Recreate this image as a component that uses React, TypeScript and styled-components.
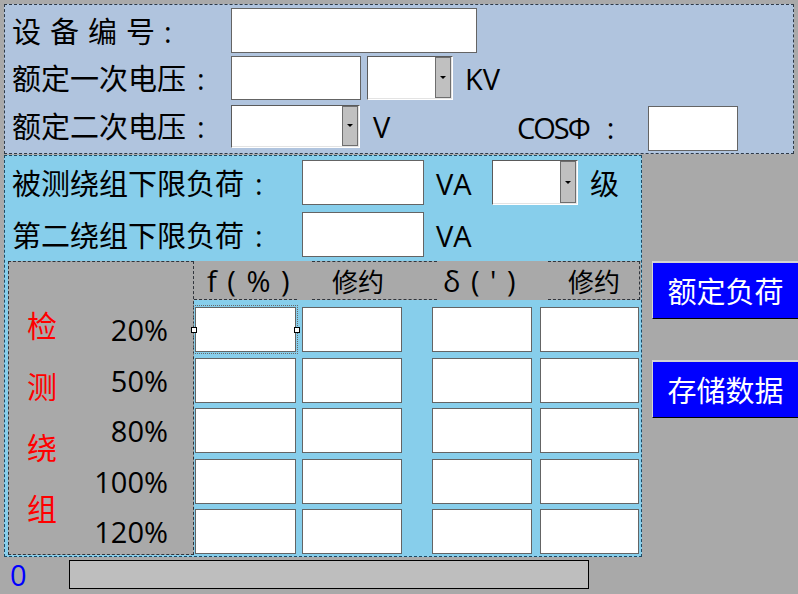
import React from "react";
import styled, { createGlobalStyle } from "styled-components";

const FONT = `"Open Sans", "Noto Sans CJK SC", sans-serif`;

const GlobalStyle = createGlobalStyle`
  html, body { margin: 0; padding: 0; background: #a9a9a9; }
  body { font-family: ${FONT}; }
  *, *::before, *::after { box-sizing: border-box; }
`;

const Page = styled.div`
  width: 798px;
  height: 594px;
  overflow: hidden;
  padding: 4px 0 0 4px;
  background: #a9a9a9;
  font-family: ${FONT};
  color: #000;
`;

const TopPanel = styled.div`
  width: 790px;
  height: 150px;
  border: 1px dashed #2e3a48;
  background: #b0c4de;
  padding: 3px 0 0 7px;
  display: flex;
  flex-direction: column;
`;

const FormRow = styled.div<{ $h: number; $mt?: number; $ml?: number }>`
  display: flex;
  align-items: center;
  height: ${(p) => p.$h}px;
  margin-top: ${(p) => p.$mt ?? 0}px;
  margin-left: ${(p) => p.$ml ?? 0}px;
`;

const Label = styled.div<{ $w: number; $ls?: number }>`
  width: ${(p) => p.$w}px;
  flex: none;
  font-size: 29px;
  line-height: 34px;
  letter-spacing: ${(p) => p.$ls ?? 0}px;
  white-space: nowrap;
  padding-top: 2px;
`;

const Colon = styled.span<{ $ml: number }>`
  margin-left: ${(p) => p.$ml}px;
  letter-spacing: 0;
`;

const TextBox = styled.div<{ $w: number; $h: number; $mt?: number }>`
  flex: none;
  width: ${(p) => p.$w}px;
  height: ${(p) => p.$h}px;
  margin-top: ${(p) => p.$mt ?? 0}px;
  background: #fff;
  border: 1px solid #646464;
`;

const Combo = styled.div<{ $w: number; $h: number; $ml?: number }>`
  flex: none;
  width: ${(p) => p.$w}px;
  height: ${(p) => p.$h}px;
  margin-left: ${(p) => p.$ml ?? 0}px;
  display: flex;
  justify-content: flex-end;
  align-items: stretch;
  background: #fff;
  border-style: solid;
  border-width: 1px;
  border-color: #5a5a5a #ffffff #ffffff #5a5a5a;
  box-shadow: inset -1px -1px 0 #e3e3e3;
  padding: 0 1px 1px 0;
`;

const DropButton = styled.div`
  width: 16px;
  background: #c0c0c0;
  border: 1px solid #6e6e6e;
  display: flex;
  align-items: center;
  justify-content: center;
  &::after {
    content: "";
    border-left: 3px solid transparent;
    border-right: 3px solid transparent;
    border-top: 3px solid #000;
  }
`;

const Unit = styled.div<{ $ml: number; $w?: number }>`
  flex: none;
  margin-left: ${(p) => p.$ml}px;
  width: ${(p) => (p.$w ? `${p.$w}px` : "auto")};
  font-size: 29px;
  line-height: 34px;
  padding-top: 2px;
  white-space: nowrap;
`;

const CosLabel = styled.div`
  flex: none;
  width: 131px;
  font-size: 29px;
  line-height: 34px;
  padding-top: 4px;
  white-space: nowrap;
  letter-spacing: -2px;
`;

const Middle = styled.div`
  display: flex;
  margin-top: 1px;
`;

const SkyPanel = styled.div`
  width: 638px;
  height: 402px;
  border: 1px dashed #1e4a64;
  background: #87ceeb;
  padding: 4px 0 0 3px;
  display: flex;
  flex-direction: column;
`;

const Section = styled.div`
  display: flex;
  margin-top: 4px;
`;

const GroupBox = styled.div`
  width: 186px;
  height: 294px;
  flex: none;
  background: #a9a9a9;
  border: 1px dashed #30353c;
  display: flex;
`;

const RedCol = styled.div`
  width: 62px;
  padding: 32px 0 0 18px;
  display: flex;
  flex-direction: column;
  font-family: "Noto Sans CJK SC", sans-serif;
  font-size: 30px;
  line-height: 61px;
  color: #ff0000;
`;

const PctCol = styled.div`
  flex: 1;
  padding: 45px 25px 0 0;
  display: flex;
  flex-direction: column;
  gap: 5.5px;
`;

const Pct = styled.div`
  height: 45px;
  display: flex;
  align-items: center;
  justify-content: flex-end;
  font-size: 29px;
`;

const Table = styled.div`
  width: 447px;
  display: flex;
  flex-direction: column;
`;

const HeaderStrip = styled.div`
  height: 39px;
  background: #a9a9a9;
  display: flex;
`;

type Sides = { t?: boolean; b?: boolean; r?: boolean };

const HeadCell = styled.div<{ $w: number; $pl: number; $s: Sides; $ls?: number; $fs?: number }>`
  flex: none;
  width: ${(p) => p.$w}px;
  padding-left: ${(p) => p.$pl}px;
  display: flex;
  align-items: center;
  font-size: ${(p) => p.$fs ?? 26}px;
  letter-spacing: ${(p) => p.$ls ?? 0}px;
  white-space: pre;
  border-top: 1px ${(p) => (p.$s.t ? "dashed #30353c" : "solid transparent")};
  border-bottom: 1px ${(p) => (p.$s.b ? "dashed #30353c" : "solid transparent")};
  border-right: ${(p) => (p.$s.r ? "1px dashed #30353c" : "0")};
`;

const Rows = styled.div`
  padding-top: 7px;
  display: flex;
  flex-direction: column;
  gap: 5.5px;
`;

const DataRow = styled.div`
  display: flex;
  height: 45px;
`;

const Cell = styled.div<{ $w: number; $ml: number; $selected?: boolean }>`
  position: relative;
  flex: none;
  width: ${(p) => p.$w}px;
  height: 45px;
  margin-left: ${(p) => p.$ml}px;
  background: #fff;
  border: 1px solid #646464;
  ${(p) =>
    p.$selected
      ? `
    outline: 1px dotted #6a6a6a;
    outline-offset: 1px;
    &::before, &::after {
      content: "";
      position: absolute;
      top: 19px;
      width: 6px;
      height: 6px;
      background: #fff;
      border: 1px solid #000;
    }
    &::before { left: -5px; }
    &::after { right: -5px; }
  `
      : ""}
`;

const ButtonCol = styled.div`
  margin-left: 10px;
  padding-top: 106px;
  display: flex;
  flex-direction: column;
  gap: 41px;
`;

const BlueButton = styled.div`
  width: 146px;
  height: 58px;
  background: #0000ff;
  color: #fff;
  border-top: 2px solid #d4d4d4;
  border-left: 1px solid #d4d4d4;
  border-bottom: 1px solid #000;
  display: flex;
  align-items: center;
  justify-content: center;
  font-family: "Noto Sans CJK SC", sans-serif;
  font-size: 29px;
  padding-bottom: 1px;
`;

const StatusBar = styled.div`
  display: flex;
  align-items: center;
  height: 29px;
  margin: 3px 0 0 6px;
`;

const Counter = styled.div`
  width: 59px;
  color: #0000ff;
  font-size: 29px;
  line-height: 29px;
`;

const Progress = styled.div`
  width: 520px;
  height: 29px;
  border: 1px solid #000;
  background: #bebebe;
`;

const columns = [
  { w: 101, ml: 1 },
  { w: 100, ml: 6 },
  { w: 100, ml: 30 },
  { w: 99, ml: 8 },
];

const percents = ["20%", "50%", "80%", "100%", "120%"];

export default function App() {
  return (
    <>
      <GlobalStyle />
      <Page>
        <TopPanel>
          <FormRow $h={45}>
            <Label $w={219} $ls={9}>
              设备编号<Colon $ml={0}>:</Colon>
            </Label>
            <TextBox $w={246} $h={45} />
          </FormRow>
          <FormRow $h={44} $mt={3}>
            <Label $w={219}>
              额定一次电压<Colon $ml={11}>:</Colon>
            </Label>
            <TextBox $w={130} $h={44} />
            <Combo $w={86} $h={44} $ml={6}>
              <DropButton />
            </Combo>
            <Unit $ml={12}>KV</Unit>
          </FormRow>
          <FormRow $h={44} $mt={4}>
            <Label $w={219}>
              额定二次电压<Colon $ml={11}>:</Colon>
            </Label>
            <Combo $w={129} $h={43}>
              <DropButton />
            </Combo>
            <Unit $ml={13} $w={144}>V</Unit>
            <CosLabel>
              COSΦ<Colon $ml={18}>:</Colon>
            </CosLabel>
            <TextBox $w={90} $h={45} $mt={4} />
          </FormRow>
        </TopPanel>

        <Middle>
          <SkyPanel>
            <FormRow $h={45} $ml={4}>
              <Label $w={290}>
                被测绕组下限负荷<Colon $ml={11}>:</Colon>
              </Label>
              <TextBox $w={122} $h={45} />
              <Unit $ml={12} $w={56}>VA</Unit>
              <Combo $w={86} $h={45}>
                <DropButton />
              </Combo>
              <Unit $ml={12}>级</Unit>
            </FormRow>
            <FormRow $h={45} $mt={7} $ml={4}>
              <Label $w={290}>
                第二绕组下限负荷<Colon $ml={11}>:</Colon>
              </Label>
              <TextBox $w={122} $h={45} />
              <Unit $ml={12}>VA</Unit>
            </FormRow>

            <Section>
              <GroupBox>
                <RedCol>
                  <div>检</div>
                  <div>测</div>
                  <div>绕</div>
                  <div>组</div>
                </RedCol>
                <PctCol>
                  {percents.map((p) => (
                    <Pct key={p}>{p}</Pct>
                  ))}
                </PctCol>
              </GroupBox>

              <Table>
                <HeaderStrip>
                  <HeadCell $w={103} $pl={13} $ls={1.5} $fs={29} $s={{ b: true }}>f ( % )</HeadCell>
                  <HeadCell $w={15} $pl={0} $s={{}} />
                  <HeadCell $w={125} $pl={20} $s={{ t: true, b: true }}>修约</HeadCell>
                  <HeadCell $w={111} $pl={6} $ls={1.5} $fs={29} $s={{}}>δ ( ' )</HeadCell>
                  <HeadCell $w={92} $pl={20} $s={{ t: true, b: true, r: true }}>修约</HeadCell>
                </HeaderStrip>
                <Rows>
                  {percents.map((p, r) => (
                    <DataRow key={p}>
                      {columns.map((c, i) => (
                        <Cell key={i} $w={c.w} $ml={c.ml} $selected={r === 0 && i === 0} />
                      ))}
                    </DataRow>
                  ))}
                </Rows>
              </Table>
            </Section>
          </SkyPanel>

          <ButtonCol>
            <BlueButton>额定负荷</BlueButton>
            <BlueButton>存储数据</BlueButton>
          </ButtonCol>
        </Middle>

        <StatusBar>
          <Counter>0</Counter>
          <Progress />
        </StatusBar>
      </Page>
    </>
  );
}
